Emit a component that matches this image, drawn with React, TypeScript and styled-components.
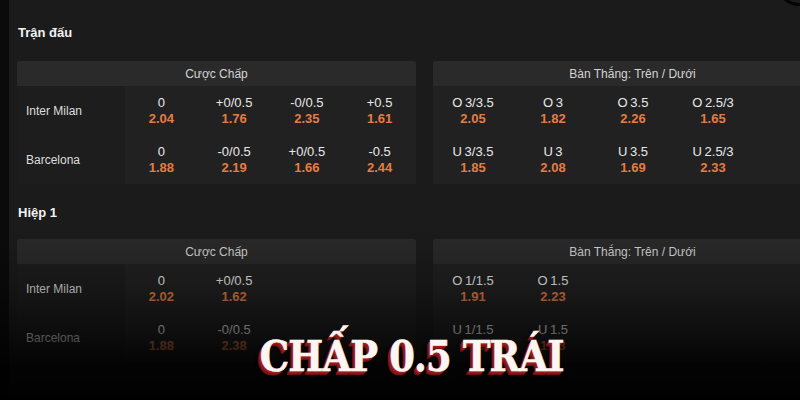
import React from "react";
import styled, { createGlobalStyle } from "styled-components";

const GlobalStyle = createGlobalStyle`
  html, body { margin: 0; padding: 0; background: #000; }
  * { box-sizing: border-box; }
`;

const Page = styled.div`
  position: relative;
  width: 800px;
  height: 400px;
  overflow: hidden;
  display: flex;
  font-family: "Liberation Sans", Arial, sans-serif;
`;

const Strip = styled.div`
  width: 9px;
  flex: none;
  background: #0b0b0b;
`;

const Main = styled.div`
  flex: 1;
  background: #1b1b1b;
  padding: 25px 0 0 8px;
  display: flex;
  flex-direction: column;
  gap: 21px;
  min-width: 0;
`;

const Section = styled.section`
  display: flex;
  flex-direction: column;
  gap: 20px;
  &:nth-child(2) {
    gap: 18px;
  }
`;

const Title = styled.h2`
  margin: 0;
  font-size: 13px;
  line-height: 16px;
  font-weight: 700;
  color: #f2f2f2;
  padding-left: 1px;
`;

const PanelRow = styled.div`
  display: flex;
  gap: 17px;
`;

const Panel = styled.div`
  width: 399px;
  flex: none;
  display: flex;
  flex-direction: column;
`;

const PanelHeader = styled.div`
  height: 25px;
  background: #2a2a2a;
  color: #d4d4d4;
  font-size: 12px;
  display: flex;
  align-items: center;
  justify-content: center;
  border-radius: 2px 2px 0 0;
`;

const Body = styled.div`
  display: flex;
`;

const TeamCol = styled.div`
  width: 108px;
  flex: none;
  background: #1d1d1d;
  display: flex;
  flex-direction: column;
`;

const TeamName = styled.div`
  height: 49px;
  display: flex;
  align-items: center;
  padding-left: 9px;
  font-size: 12px;
  color: #dedede;
`;

const OddsArea = styled.div<{ $cols: number; $colW: number }>`
  flex: 1;
  background: #212121;
  display: grid;
  grid-template-columns: repeat(${(p) => p.$cols}, ${(p) => p.$colW}px);
  grid-auto-rows: 49px;
`;

const Cell = styled.div`
  display: flex;
  flex-direction: column;
  align-items: center;
  justify-content: center;
`;

const Line = styled.span`
  font-size: 13px;
  line-height: 16px;
  color: #e8e8e8;
`;

const Odd = styled.span`
  font-size: 13px;
  line-height: 16px;
  font-weight: 700;
  color: #e67c44;
`;

const Fade = styled.div`
  position: absolute;
  inset: 0;
  pointer-events: none;
  background: linear-gradient(
    to bottom,
    rgba(0, 0, 0, 0) 0px,
    rgba(0, 0, 0, 0) 225px,
    rgba(0, 0, 0, 0.22) 285px,
    rgba(0, 0, 0, 0.6) 335px,
    rgba(0, 0, 0, 0.88) 365px,
    rgba(0, 0, 0, 0.96) 400px
  );
`;

const Corner = styled.div`
  position: absolute;
  top: -40px;
  right: -22px;
  width: 46px;
  height: 46px;
  border-radius: 50%;
  border: 3px solid #050505;
`;

const Caption = styled.div`
  position: absolute;
  left: 0;
  right: 0;
  top: 331px;
  display: flex;
  justify-content: center;
  padding-left: 24px;
  pointer-events: none;
`;

const CaptionText = styled.span`
  display: inline-block;
  transform: scaleX(0.86);
  font-family: "DejaVu Serif", "Liberation Serif", serif;
  font-weight: 700;
  font-size: 43px;
  line-height: 50px;
  letter-spacing: -1px;
  color: #fbf6f2;
  -webkit-text-stroke: 0.6px #fbf6f2;
  text-shadow: -1px 1px 0 #a61f1f, -2px 2px 0 #9a1a1a, -3px 3px 0 #851515,
    -4px 4px 0 #6e1010, -4px 5px 4px rgba(0, 0, 0, 0.75);
`;

type Pair = [string, string];

const OddsGrid: React.FC<{ rows: Pair[][]; cols: number; colW: number }> = ({
  rows,
  cols,
  colW,
}) => (
  <OddsArea $cols={cols} $colW={colW}>
    {rows.map((row, ri) =>
      Array.from({ length: cols }).map((_, ci) => {
        const c = row[ci];
        return (
          <Cell key={`${ri}-${ci}`}>
            {c && (
              <>
                <Line>{c[0]}</Line>
                <Odd>{c[1]}</Odd>
              </>
            )}
          </Cell>
        );
      })
    )}
  </OddsArea>
);

const teams = ["Inter Milan", "Barcelona"];

const S = "\u2009";

const sections: {
  title: string;
  hdp: Pair[][];
  ou: Pair[][];
}[] = [
  {
    title: "Trận đấu",
    hdp: [
      [["0", "2.04"], ["+0/0.5", "1.76"], ["-0/0.5", "2.35"], ["+0.5", "1.61"]],
      [["0", "1.88"], ["-0/0.5", "2.19"], ["+0/0.5", "1.66"], ["-0.5", "2.44"]],
    ],
    ou: [
      [[`O${S}3/3.5`, "2.05"], [`O${S}3`, "1.82"], [`O${S}3.5`, "2.26"], [`O${S}2.5/3`, "1.65"]],
      [[`U${S}3/3.5`, "1.85"], [`U${S}3`, "2.08"], [`U${S}3.5`, "1.69"], [`U${S}2.5/3`, "2.33"]],
    ],
  },
  {
    title: "Hiệp 1",
    hdp: [
      [["0", "2.02"], ["+0/0.5", "1.62"]],
      [["0", "1.88"], ["-0/0.5", "2.38"]],
    ],
    ou: [
      [[`O${S}1/1.5`, "1.91"], [`O${S}1.5`, "2.23"]],
      [[`U${S}1/1.5`, "1.91"], [`U${S}1.5`, "1.83"]],
    ],
  },
];

export default function App() {
  return (
    <>
      <GlobalStyle />
      <Page>
        <Strip />
        <Main>
          {sections.map((s) => (
            <Section key={s.title}>
              <Title>{s.title}</Title>
              <PanelRow>
                <Panel>
                  <PanelHeader>Cược Chấp</PanelHeader>
                  <Body>
                    <TeamCol>
                      {teams.map((t) => (
                        <TeamName key={t}>{t}</TeamName>
                      ))}
                    </TeamCol>
                    <OddsGrid rows={s.hdp} cols={4} colW={72.75} />
                  </Body>
                </Panel>
                <Panel>
                  <PanelHeader>Bàn Thắng: Trên / Dưới</PanelHeader>
                  <Body>
                    <OddsGrid rows={s.ou} cols={5} colW={80} />
                  </Body>
                </Panel>
              </PanelRow>
            </Section>
          ))}
        </Main>
        <Fade />
        <Corner />
        <Caption>
          <CaptionText>CHẤP 0.5 TRÁI</CaptionText>
        </Caption>
      </Page>
    </>
  );
}
